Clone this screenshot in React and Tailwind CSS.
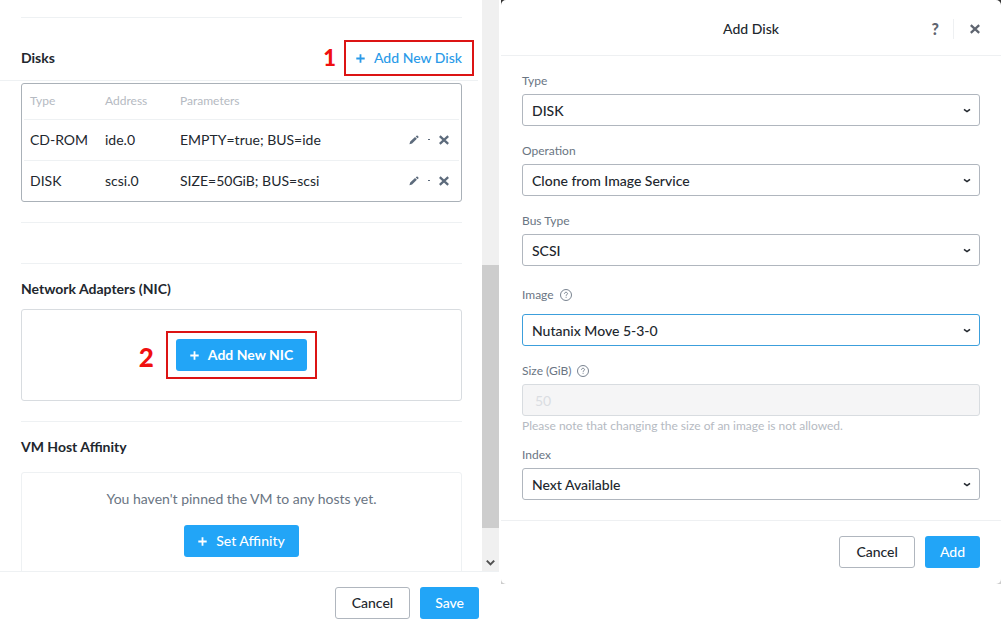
import clsx from 'clsx';

const disks = [
    { type: 'CD-ROM', address: 'ide.0', parameters: 'EMPTY=true; BUS=ide' },
    { type: 'DISK', address: 'scsi.0', parameters: 'SIZE=50GiB; BUS=scsi' },
];

function PlusIcon({ className }) {
    return (
        <svg viewBox="0 0 9 9" className={clsx('w-[9px] h-[9px]', className)} aria-hidden="true">
            <path d="M4.5 0.3v8.4M0.3 4.5h8.4" stroke="currentColor" strokeWidth="1.8" fill="none" />
        </svg>
    );
}

function CloseIcon({ className }) {
    return (
        <svg viewBox="0 0 10 10" className={clsx('w-[10px] h-[10px]', className)} aria-hidden="true">
            <path d="M0.8 1.2l8.4 7.6M9.2 1.2L0.8 8.8" stroke="currentColor" strokeWidth="2.3" fill="none" />
        </svg>
    );
}

function PencilIcon() {
    return (
        <svg viewBox="0 0 10 10" className="w-[10px] h-[10px]" fill="currentColor" aria-hidden="true">
            <path d="M0.4 9.3l0.8-2.7L6 2l1.9 1.8-4.8 4.7zM6.7 1.4L7.6 0.7c0.3-0.3 0.7-0.3 1 0l0.8 0.8c0.3 0.3 0.3 0.6 0 0.9L8.6 3.2z" />
        </svg>
    );
}

function HelpIcon() {
    return (
        <svg viewBox="0 0 12 12" className="w-3 h-3" fill="none" stroke="currentColor" aria-hidden="true">
            <circle cx="6" cy="6" r="5.5" strokeWidth="0.9" />
            <path d="M4.5 4.8c0-0.9 0.6-1.5 1.5-1.5s1.5 0.6 1.5 1.3c0 1-1.4 1-1.4 2.2M6.1 7.8v1" strokeWidth="0.9" />
        </svg>
    );
}

function Button({ primary, bold, icon, children }) {
    return (
        <button
            type="button"
            className={clsx(
                'h-8 rounded-[3px] flex items-center gap-[9px] text-sm',
                primary ? 'bg-[#22a5f7] text-white' : 'bg-white border border-[#b0b6be] text-[#22272e] px-4',
                primary && (icon ? 'px-3.5' : 'px-[15px]'),
                bold ? 'font-bold' : 'font-medium'
            )}
        >
            {icon && <PlusIcon />}
            {children}
        </button>
    );
}

function Field({ id, label, help, tall, children }) {
    return (
        <div className="flex flex-col gap-[5px]">
            <div className={clsx('flex items-center gap-1.5 text-[#6a7583]', tall ? 'h-[26px] pb-0.5' : 'h-4')}>
                <label htmlFor={id} className="text-xs leading-4">{label}</label>
                {help && <HelpIcon />}
            </div>
            {children}
        </div>
    );
}

function Select({ id, value, active }) {
    return (
        <div className="relative">
            <select
                id={id}
                className={clsx(
                    'appearance-none w-full h-8 pt-0.5 pl-[9px] pr-8 rounded-[3px] border bg-white text-sm font-medium text-[#22272e]',
                    active ? 'border-[#3c9fdc]' : 'border-[#b0b6be]'
                )}
            >
                <option>{value}</option>
            </select>
            <svg viewBox="0 0 8 6" className="absolute right-[9px] top-3.5 w-2 h-1.5 pointer-events-none" aria-hidden="true">
                <path d="M1 1.4L4 3.6 7 1.4" stroke="#22272e" strokeWidth="1.6" fill="none" />
            </svg>
        </div>
    );
}

function DiskTable() {
    return (
        <div className="border border-[#aab1b8] rounded-[3px] px-0.5">
            <table className="w-full table-fixed text-left text-sm text-[#22272e]">
                <thead>
                    <tr className="h-[35px] border-b border-[#eef1f3] text-xs text-[#b5bac2]">
                        <th className="w-[81px] pl-1.5 font-normal">Type</th>
                        <th className="w-[75px] font-normal">Address</th>
                        <th className="font-normal">Parameters</th>
                        <th className="w-[60px]"></th>
                    </tr>
                </thead>
                <tbody>
                    {disks.map((disk) => (
                        <tr key={disk.type} className="h-[41px] border-b border-[#eef1f3] last:border-b-0">
                            <td className="pl-1.5">{disk.type}</td>
                            <td>{disk.address}</td>
                            <td>{disk.parameters}</td>
                            <td className="pr-2.5">
                                <div className="flex items-center justify-end gap-[9px] text-[#5d6b7c]">
                                    <button type="button" aria-label="Edit"><PencilIcon /></button>
                                    <span className="w-0.5 h-px bg-current" />
                                    <button type="button" aria-label="Remove"><CloseIcon /></button>
                                </div>
                            </td>
                        </tr>
                    ))}
                </tbody>
            </table>
        </div>
    );
}

function Scrollbar() {
    return (
        <div className="w-[17px] shrink-0 flex flex-col bg-[#f0f0f0]">
            <div className="flex-[265]" />
            <div className="flex-[263] bg-[#cdcdcd]" />
            <div className="flex-[43] flex items-end justify-center">
                <svg viewBox="0 0 9 8" className="w-[9px] h-2 mb-1" aria-hidden="true">
                    <path d="M0.8 1.6l3.7 3.8 3.7-3.8" stroke="#505050" strokeWidth="2" fill="none" />
                </svg>
            </div>
        </div>
    );
}

function VmPanel() {
    return (
        <section className="h-screen flex flex-col bg-white">
            <div className="flex-1 min-h-0 flex">
                <div className="flex-1 overflow-hidden">
                    <div className="mt-[17px] ml-[21px] mr-5 border-t border-[#eef1f3]" />

                    {/* Disks */}
                    <div className="h-[63px] pt-[18px] pl-[21px] pr-5 mr-1 border-b border-[#eef1f3] flex items-center justify-between">
                        <h2 className="text-sm font-bold text-[#22272e]">Disks</h2>
                        <div className="relative -mr-1">
                            <span className="absolute -inset-x-3 -inset-y-2 border-2 border-[#dc1414] pointer-events-none" />
                            <span className="absolute right-full mr-5 -top-1 text-[22px] leading-7 font-black text-[#f01010]">1</span>
                            <button type="button" className="flex items-center gap-[9px] text-sm leading-5 font-medium text-[#2a9ae8]">
                                <PlusIcon />
                                Add New Disk
                            </button>
                        </div>
                    </div>

                    <div className="pl-[21px] pr-5 pt-0.5">
                        <DiskTable />
                        <div className="mt-5 border-t border-[#eef1f3]" />
                        <div className="mt-10 border-t border-[#eef1f3]" />

                        {/* Network adapters */}
                        <h2 className="h-[45px] pt-1 flex items-center text-sm font-bold text-[#22272e]">Network Adapters (NIC)</h2>
                        <div className="h-[92px] border border-[#d8dce0] rounded-[3px] flex items-center justify-center">
                            <div className="relative">
                                <span className="absolute -inset-x-2.5 -inset-y-2 border-2 border-[#dc1414] pointer-events-none" />
                                <span className="absolute right-full mr-[22px] top-0.5 text-[26px] leading-8 font-black text-[#f01010]">2</span>
                                <Button primary bold icon>Add New NIC</Button>
                            </div>
                        </div>
                        <div className="mt-5 border-t border-[#eef1f3]" />

                        {/* Host affinity */}
                        <h2 className="h-[50px] flex items-center text-sm font-bold text-[#22272e]">VM Host Affinity</h2>
                        <div className="h-36 pt-4 border border-[#eef1f3] rounded-[3px] flex flex-col items-center gap-4">
                            <p className="text-sm text-[#6a7583]">You haven't pinned the VM to any hosts yet.</p>
                            <Button primary icon>Set Affinity</Button>
                        </div>
                    </div>
                </div>
                <Scrollbar />
            </div>
            <footer className="border-t border-[#eef1f3] pt-[15px] pb-2.5 px-5 flex justify-end gap-2.5">
                <Button>Cancel</Button>
                <Button primary>Save</Button>
            </footer>
        </section>
    );
}

function AddDiskDialog() {
    return (
        <div className="self-start bg-linear-to-b from-[#333333] to-[#cccccc]">
            <section className="bg-white rounded-[5px]">
                <header className="h-14 pt-0.5 px-[21px] border-b border-[#eef0f2] grid grid-cols-[1fr_auto_1fr] items-center">
                    <h1 className="col-start-2 text-sm font-medium text-[#22272e]">Add Disk</h1>
                    <div className="flex items-center justify-end text-[#5f6570]">
                        <button type="button" aria-label="Help" className="text-base font-black">?</button>
                        <span className="w-px h-5 ml-3.5 mr-4 bg-[#eef0f2]" />
                        <button type="button" aria-label="Close"><CloseIcon /></button>
                    </div>
                </header>
                <form className="px-[21px] pt-[17px] pb-5 flex flex-col gap-[17px]">
                    <Field id="type" label="Type">
                        <Select id="type" value="DISK" />
                    </Field>
                    <Field id="operation" label="Operation">
                        <Select id="operation" value="Clone from Image Service" />
                    </Field>
                    <Field id="bus" label="Bus Type">
                        <Select id="bus" value="SCSI" />
                    </Field>
                    <Field id="image" label="Image" help tall>
                        <Select id="image" value="Nutanix Move 5-3-0" active />
                    </Field>
                    <div>
                        <Field id="size" label="Size (GiB)" help>
                            <input
                                id="size"
                                disabled
                                defaultValue="50"
                                className="w-full h-8 px-3 rounded-[3px] border border-[#d8dce0] bg-[#f5f5f6] text-sm text-[#dadde2]"
                            />
                        </Field>
                        <p className="mt-0.5 mb-[13px] text-xs leading-4 text-[#b5bac2]">
                            Please note that changing the size of an image is not allowed.
                        </p>
                        <Field id="index" label="Index">
                            <Select id="index" value="Next Available" />
                        </Field>
                    </div>
                </form>
                <footer className="border-t border-[#eef0f2] pt-[15px] pb-4 px-[21px] flex justify-end gap-2.5">
                    <Button>Cancel</Button>
                    <Button primary>Add</Button>
                </footer>
            </section>
        </div>
    );
}

export default function App() {
    return (
        <main className="min-h-screen grid grid-cols-[499fr_500fr] gap-0.5 bg-white font-['Lato',sans-serif]">
            <VmPanel />
            <AddDiskDialog />
        </main>
    );
}
